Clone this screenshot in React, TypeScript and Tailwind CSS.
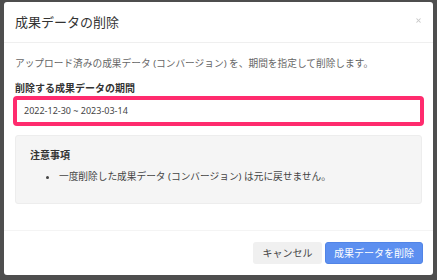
import { X } from "lucide-react";

const App = () => {
  return (
    <div
      className="w-[437px] h-[280px] bg-[#4e4e4e] pt-[2px] pl-[4px] overflow-hidden"
      style={{ fontFamily: '"Noto Sans", "Noto Sans CJK JP", sans-serif' }}
    >
      <div className="w-[429px] h-[273px] bg-white rounded-[3px] flex flex-col">
        <div className="h-[41px] shrink-0 border-b border-[#efefef] flex items-center justify-between pl-[11px] pr-[11px]">
          <h2 className="text-[13px] text-[#333333] leading-none">成果データの削除</h2>
          <X className="w-[7px] h-[7px] text-[#c8c8c8] -mt-[4px]" strokeWidth={3.5} />
        </div>
        <div className="px-[11px] pt-[13px] h-[188px] shrink-0 border-b border-[#f4f4f4]">
          <p className="text-[9.7px] text-[#666666] leading-[16px] whitespace-nowrap">
            アップロード済みの成果データ (コンバージョン) を、期間を指定して削除します。
          </p>
          <div className="mt-[9px] text-[10px] font-bold text-[#333333] leading-[14px]">
            削除する成果データの期間
          </div>
          <div className="mt-[1px] -mx-[2px] h-[30px] border-[4px] border-[#ff2b6e] rounded-[4px] flex items-center pl-[7px]">
            <span className="text-[9px] text-[#444444]">2022-12-30 ~ 2023-03-14</span>
          </div>
          <div className="mt-[9px] h-[69px] bg-[#f5f5f5] border border-[#ededed] rounded-[3px] pl-[14px] pt-[12px]">
            <div className="text-[10px] font-bold text-[#333333] leading-[14px]">注意事項</div>
            <ul className="mt-[8px] pl-[29px] list-disc text-[9.7px] text-[#444444] leading-[14px]">
              <li>一度削除した成果データ (コンバージョン) は元に戻せません。</li>
            </ul>
          </div>
        </div>
        <div className="flex-1 flex items-start justify-end gap-[3px] pr-[10px] pt-[11px]">
          <button className="h-[22px] w-[69px] bg-[#f0f0f0] rounded-[3px] text-[10px] text-[#444444]">
            キャンセル
          </button>
          <button className="h-[22px] w-[98px] bg-[#5c8ff0] rounded-[3px] text-[10px] text-white border border-[#5184e6]">
            成果データを削除
          </button>
        </div>
      </div>
    </div>
  );
};

export default App;
